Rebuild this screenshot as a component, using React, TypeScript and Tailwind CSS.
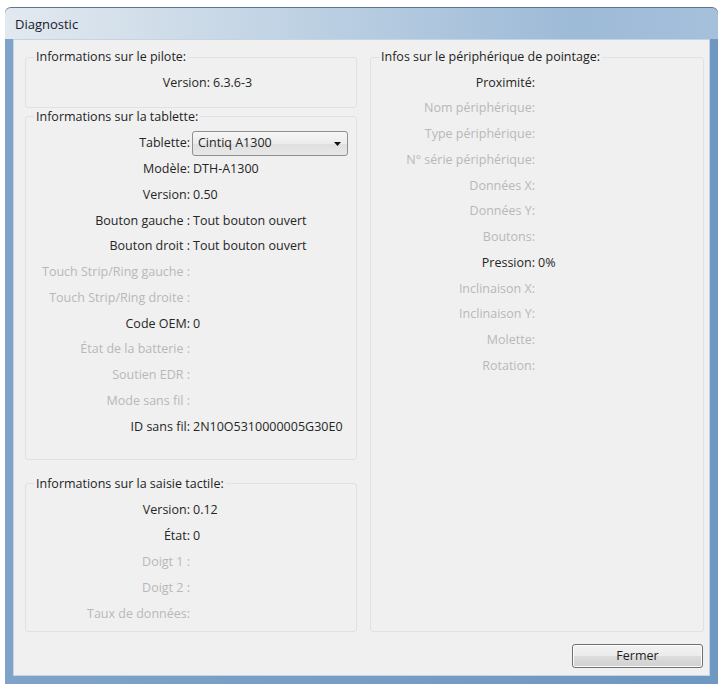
import type { ReactNode } from 'react'

type Field = { label: string; value?: string; on?: boolean }

const TABLET_ROWS: Field[] = [
  { label: 'Modèle:', value: 'DTH-A1300', on: true },
  { label: 'Version:', value: '0.50', on: true },
  { label: 'Bouton gauche :', value: 'Tout bouton ouvert', on: true },
  { label: 'Bouton droit :', value: 'Tout bouton ouvert', on: true },
  { label: 'Touch Strip/Ring gauche :' },
  { label: 'Touch Strip/Ring droite :' },
  { label: 'Code OEM:', value: '0', on: true },
  { label: 'État de la batterie :' },
  { label: 'Soutien EDR :' },
  { label: 'Mode sans fil :' },
  { label: 'ID sans fil:', value: '2N10O5310000005G30E0', on: true },
]

const TOUCH_ROWS: Field[] = [
  { label: 'Version:', value: '0.12', on: true },
  { label: 'État:', value: '0', on: true },
  { label: 'Doigt 1 :' },
  { label: 'Doigt 2 :' },
  { label: 'Taux de données:' },
]

const POINTER_ROWS: Field[] = [
  { label: 'Proximité:', on: true },
  { label: 'Nom périphérique:' },
  { label: 'Type périphérique:' },
  { label: 'N° série périphérique:' },
  { label: 'Données X:' },
  { label: 'Données Y:' },
  { label: 'Boutons:' },
  { label: 'Pression:', value: '0%', on: true },
  { label: 'Inclinaison X:' },
  { label: 'Inclinaison Y:' },
  { label: 'Molette:' },
  { label: 'Rotation:' },
]

function Row({ label, value, on, tall }: Field & { tall?: boolean }) {
  return (
    <div className={`flex items-center ${tall ? 'h-[26px]' : 'h-[25.75px]'}`}>
      <span className={`w-[164px] shrink-0 text-right ${on ? 'text-[#262626]' : 'text-[#b8b8b8]'}`}>{label}</span>
      {value && <span className="pl-[3px] text-[#262626]">{value}</span>}
    </div>
  )
}

function GroupBox({ title, className = '', children }: { title: string; className?: string; children: ReactNode }) {
  return (
    <fieldset className={`min-w-0 rounded-[3px] border border-[#dfe2e5] ${className}`}>
      <legend className="ml-[8px] px-[2px] leading-[16px] text-[#1f1f1f]">{title}</legend>
      {children}
    </fieldset>
  )
}

export default function App() {
  return (
    <div className="h-[684px] w-[723px] overflow-hidden bg-white pl-[5px] pt-[7px] font-['Open_Sans',sans-serif] text-[12.5px]">
      <div className="flex h-[677px] w-[713px] flex-col rounded-t-[6px] border-t border-[#5d7590] bg-[linear-gradient(to_right,#7fa3c8,#6e97c1)]">
        {/* title bar */}
        <div className="flex h-[31px] items-center rounded-t-[6px] bg-[linear-gradient(to_right,#e2e9f0_0%,#cddbe8_25%,#b2c9df_55%,#9dbad7_80%,#a5c0db_100%)] pl-[10px] pt-[2px]">
          <span className="text-[13px] text-[#16202c]">Diagnostic</span>
        </div>

        <div className="flex flex-1 px-[8px] pb-[8px]">
          <div className="flex flex-1 flex-col border border-[#c3d4e6] bg-[#f0f0f0] pb-[7px] pl-[11px] pr-[5px] pt-[9px]">
            <div className="grid flex-1 grid-cols-[332px_334px] gap-x-[13px]">
              <div className="flex flex-col">
                <GroupBox title="Informations sur le pilote:" className="pb-[11px] pt-[5px]">
                  <div className="flex h-[25.75px] items-center">
                    <span className="w-[184px] shrink-0 text-right text-[#262626]">Version:</span>
                    <span className="pl-[3px] text-[#262626]">6.3.6-3</span>
                  </div>
                </GroupBox>

                <GroupBox title="Informations sur la tablette:" className="mt-[1px] pb-[19px] pt-[6px]">
                  <div className="flex h-[25.75px] items-center">
                    <span className="w-[164px] shrink-0 text-right text-[#262626]">Tablette:</span>
                    <div className="ml-[2px] flex h-[25px] w-[156px] items-center justify-between rounded-[3px] border border-[#8e8f8f] bg-[linear-gradient(to_bottom,#f6f6f6_0%,#ececec_50%,#dfdfdf_51%,#e8e8e8_100%)] pl-[5px] pr-[6px] text-[#262626]">
                      <span>Cintiq A1300</span>
                      <svg width="7" height="4" viewBox="0 0 7 4">
                        <path d="M0 0h7L3.5 4z" fill="#111" />
                      </svg>
                    </div>
                  </div>
                  {TABLET_ROWS.map((r) => (
                    <Row key={r.label} {...r} />
                  ))}
                </GroupBox>

                <GroupBox title="Informations sur la saisie tactile:" className="mt-[16px] flex-1 pt-[6px]">
                  {TOUCH_ROWS.map((r) => (
                    <Row key={r.label} {...r} tall />
                  ))}
                </GroupBox>
              </div>

              <GroupBox title="Infos sur le périphérique de pointage:" className="pt-[5px]">
                {POINTER_ROWS.map((r) => (
                  <Row key={r.label} {...r} />
                ))}
              </GroupBox>
            </div>

            <div className="mt-[12px] flex justify-end pr-[1px]">
              <button
                type="button"
                className="h-[24px] w-[131px] rounded-[3px] border border-[#707070] bg-[linear-gradient(to_bottom,#f2f2f2_0%,#ebebeb_50%,#dddddd_51%,#cfcfcf_100%)] text-[#1f1f1f] shadow-[inset_0_0_0_1px_#fcfcfc]"
              >
                Fermer
              </button>
            </div>
          </div>
        </div>
      </div>
    </div>
  )
}
